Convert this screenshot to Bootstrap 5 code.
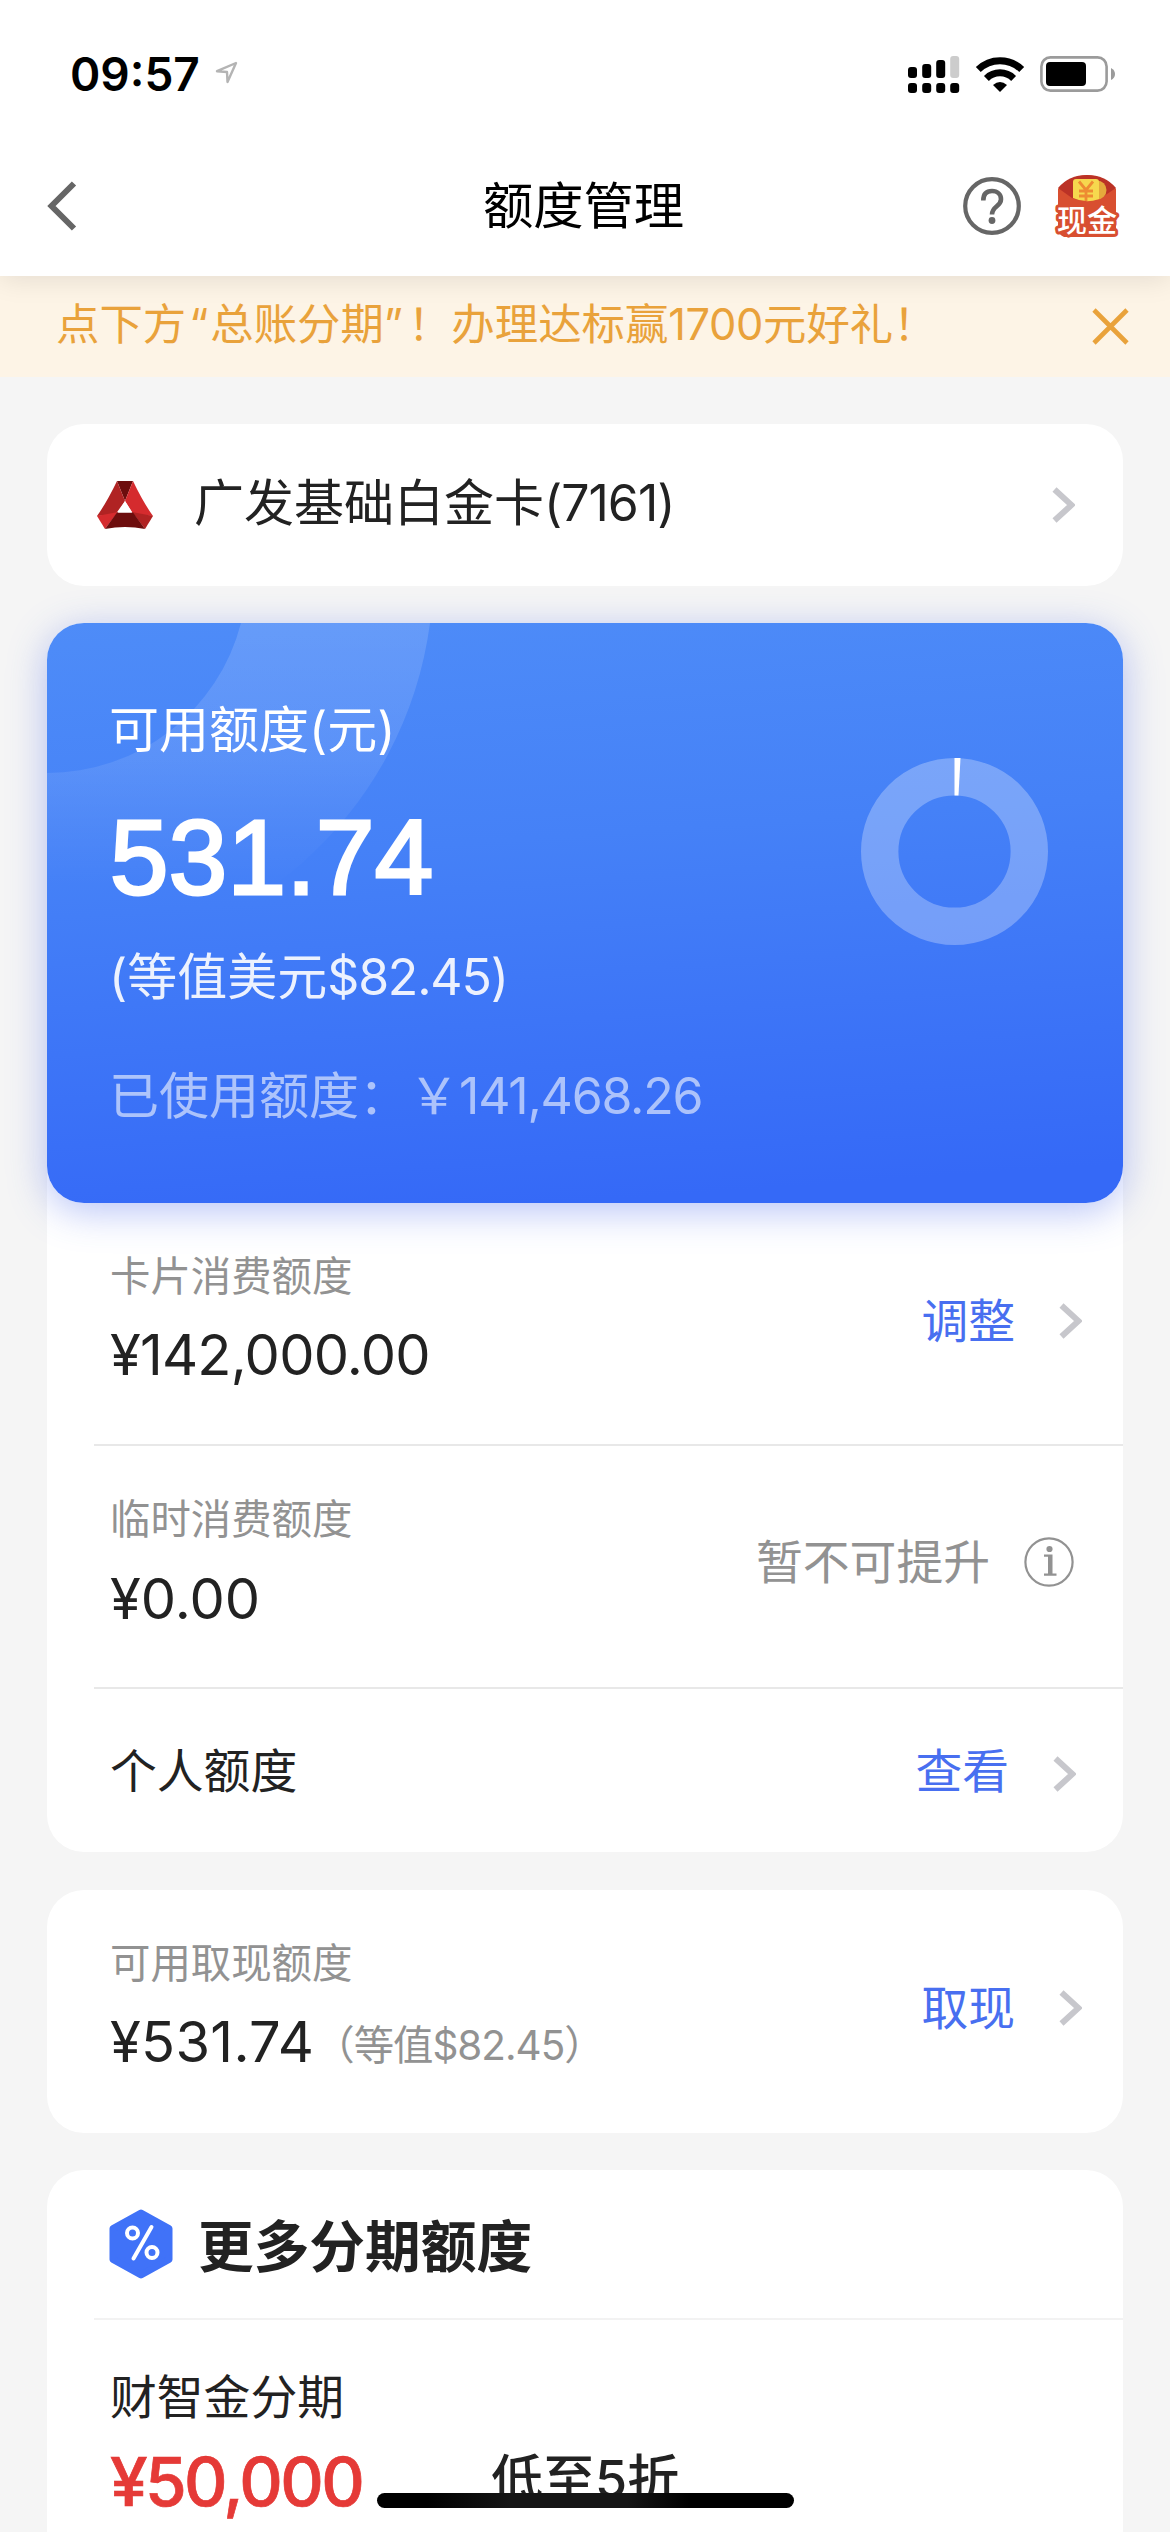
<!DOCTYPE html>
<html lang="zh-CN">
<head>
<meta charset="utf-8">
<meta name="viewport" content="width=device-width, initial-scale=1">
<title>额度管理</title>
<link href="https://cdn.jsdelivr.net/npm/bootstrap@5.3.0/dist/css/bootstrap.min.css" rel="stylesheet">
<style>
body{margin:0;background:#f5f5f5;color:#222;font-family:Inter,"Noto Sans CJK SC",sans-serif;font-size:46.8px;line-height:70px}
svg{display:block;flex:none}
.screen{width:1170px;height:2532px}
.statusbar{height:136px;padding:12px 54px 0 70px}
.clock{font-size:46px;font-weight:600;color:#000}
.locator{margin:0 0 4px 15px}
.wifi,.battery{margin-left:15px}
.titlebar{height:140px;padding:0 50px 0 47px;color:#000}
.titlebar .side{width:200px}
.page-title{font-size:50.3px}
.envelope{margin-left:33px;overflow:visible}
.topbox{box-shadow:0 3px 26px rgba(0,0,0,.1)}
.notice{height:101px;padding:0 41px 5px 56px;background:#fdf4e6;color:#e9a23b;font-size:43.4px}
.notice .digits{letter-spacing:-.4px}
.notice .quote-open{margin:0 2px 0 3px}
.notice .quote-close{margin-right:5px}
.content{padding:47px 47px 0}
.tile{border-radius:37px;background:#fff}
.bankcard{height:162px;padding:0 48px 0 50px;font-size:50px}
.bankcard .digits{letter-spacing:-1px}
.bank-name{margin:0 0 4px 41px}
.gap-y{margin-top:37px}
.limit{height:580px;border-radius:37px;padding:72px 75px 0 62px;color:#fff;background:linear-gradient(176deg,#4e8cf8 0%,#4581f7 38%,#3569f7 94%);box-shadow:0 8px 38px rgba(66,98,235,.38);font-size:50px}
.limit .decor{left:0;top:0}
.limit .digits{letter-spacing:-1.2px}
.amount{font-family:"Liberation Sans",sans-serif;font-size:105px;line-height:110px;margin:38px 0 0 1px;letter-spacing:.4px;-webkit-text-stroke:3px #fff}
.usd{margin-top:29px;opacity:.9}
.used{margin-top:49px;opacity:.58}
.ring{margin-top:63px}
.line{height:241px;padding:46px 41px 0 63px}
.sep{height:2px;margin-left:47px;background:#e8e8e8}
.sep-soft{background:#f2f2f2}
.label{font-size:40.4px;line-height:56px;color:#929292}
.value{font-size:56px;line-height:70px;margin-top:15px;letter-spacing:-.8px}
.value-zero{margin-top:16px;letter-spacing:0}
.value-cash{letter-spacing:.3px}
.paren{font-size:40.4px;color:#929292;letter-spacing:-1px;padding-top:4px}
.act{margin-top:37px;color:#486ff0}
.act .arrow{margin-left:44px}
.act-muted{margin-top:35px;color:#929292}
.info{margin:0 8px 0 34px}
.single{height:163px;padding:0 47px 0 63px}
.single .act{margin-top:0}
.single .arrow{margin-top:6px}
.cash-tile{margin-top:38px}
.cash{height:243px}
.more-head{height:148px;padding:0 62px}
.more-title{font-size:55.7px;font-weight:700;margin-left:25px;padding-top:5px}
.offer{padding:42px 63px 0}
.price{font-size:67.500px;font-weight:500;line-height:80px;color:#e53a37;letter-spacing:-2.600px;width:381px;-webkit-text-stroke:.7px #e53a37;padding-top:2px}
.rate{font-size:52px;font-weight:500;line-height:80px}
.homebar{left:377px;top:2493px;width:417px;height:15px;border-radius:8px;background:linear-gradient(90deg,#000 12%,#151515 32%,#151515 60%,#000 75%)}
</style>
</head>
<body>
<svg width="0" height="0" class="position-absolute"><defs>
<symbol id="chev" viewBox="0 0 23 36"><path d="M2.5 2.5 19.5 18 2.5 33.5" fill="none" stroke="#c7c7cc" stroke-width="6"/></symbol>
</defs></svg>
<div class="screen position-relative overflow-hidden">
<header class="topbox bg-white position-relative z-1">
  <div class="statusbar d-flex align-items-center">
    <span class="clock">09:57</span>
    <svg class="locator" width="23" height="23" viewBox="0 0 23 23"><path d="M21 2 2 10.2 12 11 12.5 21Z" fill="none" stroke="#b4b4b4" stroke-width="2.4" stroke-linejoin="round"/></svg>
    <div class="ms-auto d-flex align-items-center">
      <svg width="52" height="38" viewBox="0 0 52 38"><g><rect x="0" y="12" width="9" height="11" rx="3"/><rect x="14.2" y="9" width="9" height="14" rx="3"/><rect x="28.2" y="5" width="9" height="18" rx="3"/><rect x="42.2" y="1" width="9" height="22" rx="3" fill="#ccc"/><rect x="0" y="28" width="9" height="10" rx="3"/><rect x="14.2" y="28" width="9" height="10" rx="3"/><rect x="28.2" y="28" width="9" height="10" rx="3"/><rect x="42.2" y="28" width="9" height="10" rx="3"/></g></svg>
      <svg class="wifi" width="50" height="37" viewBox="0 0 50 37"><path d="M3.3 13.6A31 31 0 0 1 46.7 13.6" fill="none" stroke="#000" stroke-width="7"/><path d="M11.4 22.4A19.5 19.5 0 0 1 38.6 22.4" fill="none" stroke="#000" stroke-width="7"/><path d="M25 36 18 29Q25 23 32 29Z"/></svg>
      <svg class="battery" width="76" height="36" viewBox="0 0 76 36"><rect x="1.4" y="1.4" width="65.2" height="33.2" rx="9" fill="none" stroke="#9b9b9b" stroke-width="2.6"/><rect x="6" y="6" width="40" height="24" rx="4"/><path d="M71 12Q75 14 75 18T71 24Z" fill="#9b9b9b"/></svg>
    </div>
  </div>
  <nav class="titlebar d-flex align-items-center justify-content-between">
    <div class="side"><svg width="30" height="50" viewBox="0 0 30 50"><path d="M27 2.500 4.500 25 27 47.500" fill="none" stroke="#666" stroke-width="6"/></svg></div>
    <span class="page-title">额度管理</span>
    <div class="side d-flex align-items-center justify-content-end">
      <svg width="58" height="58" viewBox="0 0 58 58"><circle cx="29" cy="29" r="26.8" fill="none" stroke="#666" stroke-width="4.200"/><path d="M20.300 23.500C20.300 16.500 24 14 29 14 34.500 14 38 17.500 38 22.200 38 29.500 29 29 29 37.500" fill="none" stroke="#666" stroke-width="4.600"/><circle cx="29" cy="43.500" r="3.400" fill="#666"/></svg>
      <svg class="envelope" width="66" height="64" viewBox="0 0 66 64"><path d="M4 15Q14 2 33 1 52 2 62 15V60Q62 63 58 63H10Q4 60 4 55Z" fill="#d84f30"/><path d="M4 14Q15 1 33 1 51 1 62 14L47 24Q33 30 18 24Z" fill="#bb3226"/><circle cx="43" cy="16" r="9.500" fill="#e5a93c"/><path d="M19 8Q19 5 22 5H42Q45 5 45 8V25Q32 30 19 24Z" fill="#f6d84e"/><path d="M25 7.500 32 16 39 7.500M32 15V27M25 17H39M25 22H39" fill="none" stroke="#ee8b32" stroke-width="2.800"/><text x="33" y="57" font-family="Noto Sans CJK SC" font-size="30" font-weight="500" fill="#fff" stroke="#d84f30" stroke-width="6" stroke-linejoin="round" paint-order="stroke" text-anchor="middle">现金</text></svg>
    </div>
  </nav>
</header>
<div class="notice d-flex align-items-center justify-content-between">
  <span>点下方<span class="quote-open">“</span>总账分期<span class="quote-close">”</span>！办理达标赢<span class="digits">1700</span>元好礼！</span>
  <svg class="mt-1" width="37" height="37" viewBox="0 0 37 37"><path d="M2 2 35 35M35 2 2 35" stroke="#e9a23b" stroke-width="4.600"/></svg>
</div>
<main class="content">
  <section class="tile bankcard d-flex align-items-center">
    <svg width="56" height="48" viewBox="0 0 56 48"><path d="M20 0H36L28 20Z" fill="#6d0d0d"/><path d="M20 0 28 20 18 34 0 35Q10 21 20 0Z" fill="#b02323"/><path d="M36 0Q46 21 56 35L37 34 28 20Z" fill="#d52b2e"/><path d="M0 35 21 31 8 48Z" fill="#d52b2e"/><path d="M56 35 35 31 48 48Z" fill="#b02323"/><path d="M20 31.500H36L48 48Q28 44 8 48Z" fill="#6d0d0d"/><path d="M28 20 35 31.500H21Z" fill="#fff"/></svg>
    <span class="bank-name">广发基础白金卡<span class="digits">(7161)</span></span>
    <svg class="ms-auto" width="23" height="36"><use href="#chev"/></svg>
  </section>
  <section class="tile gap-y">
    <div class="limit position-relative d-flex justify-content-between">
      <svg class="decor position-absolute" width="400" height="360" viewBox="0 0 400 360"><defs><linearGradient id="fade" x1="0" y1="0" x2="0" y2="1"><stop offset="0" stop-color="#fff" stop-opacity=".14"/><stop offset=".4" stop-color="#fff" stop-opacity=".1"/><stop offset=".78" stop-color="#fff" stop-opacity="0"/></linearGradient><clipPath id="corner"><path d="M0 360V37A37 37 0 0 1 37 0H400V360Z"/></clipPath></defs><path clip-path="url(#corner)" d="M194 0H383A386 386 0 0 1 0 336V150A200 200 0 0 0 194 0Z" fill="url(#fade)"/></svg>
      <div class="position-relative">
        <div>可用额度(元)</div>
        <div class="amount">531.74</div>
        <div class="usd">(等值美元<span class="digits">$82.45)</span></div>
        <div class="used"><span>已使用额度：</span><span>￥</span><span class="digits">141,468.26</span></div>
      </div>
      <svg class="ring" width="187" height="187" viewBox="0 0 187 187"><circle cx="93.500" cy="93.500" r="74.800" fill="none" stroke="#fff" stroke-opacity=".28" stroke-width="37.400"/><path d="M93.500 0H99.500L97.500 37.400H93.500Z" fill="#fff"/></svg>
    </div>
    <div class="line d-flex justify-content-between">
      <div><div class="label">卡片消费额度</div><div class="value">¥142,000.00</div></div>
      <div class="act d-flex align-items-center align-self-start"><span>调整</span><svg class="arrow" width="23" height="36"><use href="#chev"/></svg></div>
    </div>
    <div class="sep"></div>
    <div class="line d-flex justify-content-between">
      <div><div class="label">临时消费额度</div><div class="value value-zero">¥0.00</div></div>
      <div class="act act-muted d-flex align-items-center align-self-start"><span>暂不可提升</span><svg class="info" width="50" height="50" viewBox="0 0 50 50"><circle cx="25" cy="25" r="23.600" fill="none" stroke="#929292" stroke-width="2.200"/><circle cx="25.500" cy="12" r="3.100" fill="#929292"/><path d="M20 17.500H28.500V36.500H32.500V38.700H20V36.500H24V19.700H20Z" fill="#929292"/></svg></div>
    </div>
    <div class="sep"></div>
    <div class="single d-flex align-items-center justify-content-between">
      <span>个人额度</span>
      <div class="act d-flex align-items-center"><span>查看</span><svg class="arrow" width="23" height="36"><use href="#chev"/></svg></div>
    </div>
  </section>
  <section class="tile cash-tile">
    <div class="line cash d-flex justify-content-between">
      <div><div class="label">可用取现额度</div><div class="value value-cash d-flex"><span>¥531.74</span><span class="paren">（等值$82.45）</span></div></div>
      <div class="act d-flex align-items-center align-self-start"><span>取现</span><svg class="arrow" width="23" height="36"><use href="#chev"/></svg></div>
    </div>
  </section>
  <section class="tile gap-y pb-5">
    <div class="more-head d-flex align-items-center">
      <svg width="64" height="70" viewBox="0 0 64 70"><path d="M32 4 60 19.500V50.500L32 66 4 50.500V19.500Z" fill="#4072f8" stroke="#4072f8" stroke-width="7" stroke-linejoin="round"/><g fill="none" stroke="#fff" stroke-width="4"><circle cx="23.500" cy="24" r="5.500"/><circle cx="43" cy="43.500" r="5.500"/><path d="M42.500 18 24.500 49.500" stroke-linecap="round"/></g></svg>
      <span class="more-title">更多分期额度</span>
    </div>
    <div class="sep sep-soft"></div>
    <div class="offer">
      <div>财智金分期</div>
      <div class="d-flex mt-2"><span class="price">¥50,000</span><span class="rate">低至5折</span></div>
    </div>
  </section>
</main>
<div class="homebar position-absolute"></div>
</div>
<script src="https://cdn.jsdelivr.net/npm/bootstrap@5.3.0/dist/js/bootstrap.bundle.min.js"></script>
</body>
</html>
